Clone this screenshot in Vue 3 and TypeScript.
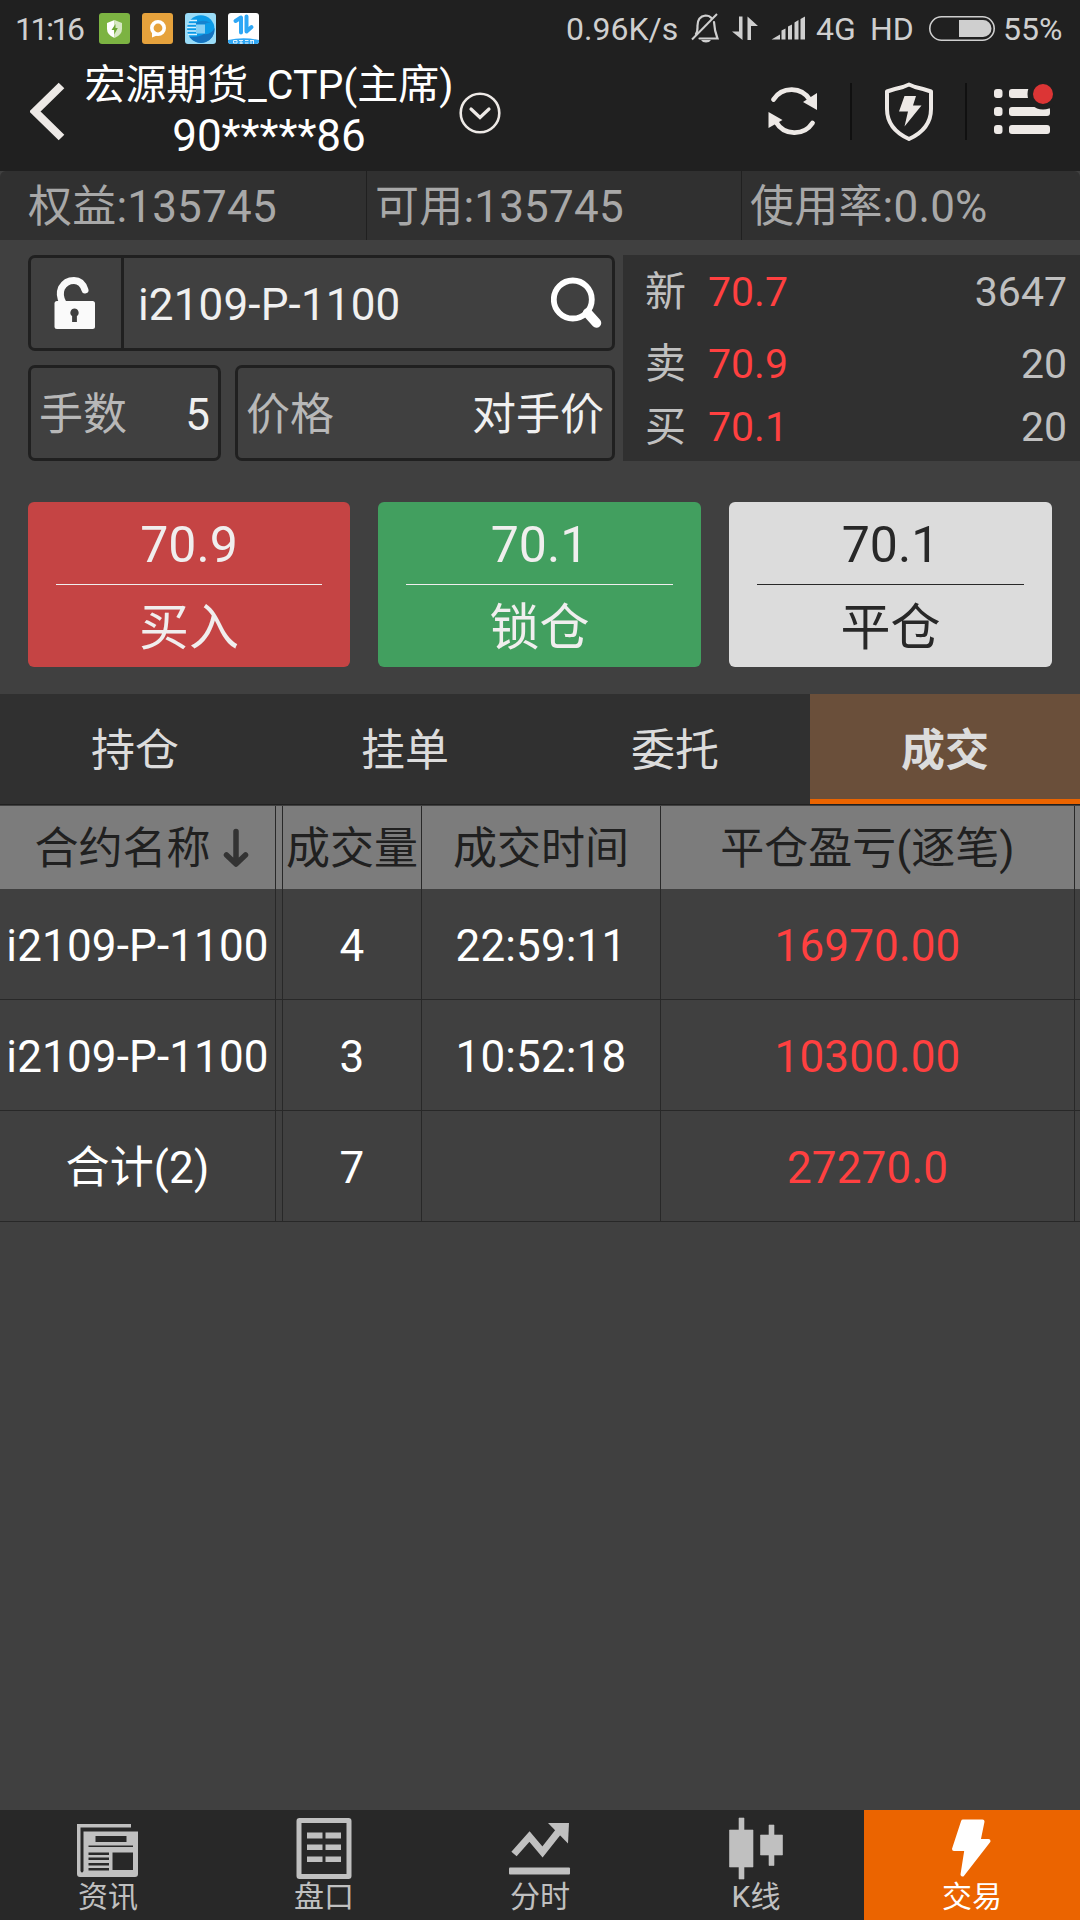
<script setup lang="ts">
interface Quote { label: string; price: string; volume: string }
interface Action { price: string; name: string; kind: string }
interface Deal { name: string; qty: string; time: string; profit: string }

const funds: string[] = ['权益:135745', '可用:135745', '使用率:0.0%']
const quotes: Quote[] = [
  { label: '新', price: '70.7', volume: '3647' },
  { label: '卖', price: '70.9', volume: '20' },
  { label: '买', price: '70.1', volume: '20' },
]
const actions: Action[] = [
  { price: '70.9', name: '买入', kind: 'buy' },
  { price: '70.1', name: '锁仓', kind: 'hedge' },
  { price: '70.1', name: '平仓', kind: 'close' },
]
const tabs: string[] = ['持仓', '挂单', '委托', '成交']
const activeTab = '成交'
const deals: Deal[] = [
  { name: 'i2109-P-1100', qty: '4', time: '22:59:11', profit: '16970.00' },
  { name: 'i2109-P-1100', qty: '3', time: '10:52:18', profit: '10300.00' },
  { name: '合计(2)', qty: '7', time: '', profit: '27270.0' },
]
</script>

<template>
  <div class="screen">
    <header class="top">
      <div class="status">
        <span class="clock">11:16</span>
        <div class="apps">
          <svg width="31" height="31" viewBox="0 0 31 31">
            <rect width="31" height="31" rx="3" fill="#7cb342" />
            <path d="M15.5 7 L8 10 V16 Q8 22 15.5 25 Z" fill="#fff" />
            <path d="M15.5 7 L23 10 V16 Q23 22 15.5 25 Z" fill="#d7e8c4" />
            <path d="M16.5 11 L12.5 17 H15.2 V21.5 L18.8 15 H16.5 Z" fill="#6aa532" />
          </svg>
          <svg width="31" height="31" viewBox="0 0 31 31">
            <rect width="31" height="31" rx="3" fill="#e6a23c" />
            <circle cx="16" cy="15" r="6.2" fill="none" stroke="#fff" stroke-width="3.6" />
            <path d="M10 18 V24.5 L16 22 Z" fill="#fff" />
          </svg>
          <svg width="31" height="31" viewBox="0 0 31 31">
            <rect width="31" height="31" rx="3" fill="#9adcf8" />
            <circle cx="15.800" cy="16" r="13.700" fill="#0b9be8" />
            <path d="M29.500 15 A13.700 13.700 0 0 1 4.500 24 Q14 24.500 19 21 Q26 22 29.500 15Z" fill="#1673c0" />
            <path d="M9 11 Q17 5 26 10 Q21 9 20 11.500 H9Z" fill="#1583d0" />
            <path d="M4.500 7.500 H12 M2.500 11 H11 M2 14.500 H11 M2 18 H11 M3 21.500 H12" stroke="#d8f2ff" stroke-width="1.400" />
            <rect x="11" y="11.500" width="9" height="9" fill="#86d0f5" />
          </svg>
          <svg width="31" height="31" viewBox="0 0 31 31">
            <rect width="31" height="31" rx="3" fill="#fff" />
            <path d="M7.5 8 L13 4.500 V19.500 M18.500 3.500 V18.500 L23.500 14" fill="none" stroke="#2ea7f5" stroke-width="4" stroke-linecap="round" stroke-linejoin="round" />
            <path d="M0 27 Q15.500 23.500 31 27 V28 Q31 31 28 31 H3 Q0 31 0 28 Z" fill="#2ea7f5" />
            <path d="M5.500 27.500 H9 V30 H5.500 Z M11 27.500 H15 M11.500 30 H15 M13 27 V31 M17 27.500 H20.500 M17 30 H20.500 M22 27.500 H25.500 M23 27 V31 M25.500 27 V31" fill="none" stroke="#dff2ff" stroke-width="1" />
          </svg>
        </div>
        <span class="speed">0.96K/s</span>
        <svg class="bell" width="28" height="30" viewBox="0 0 28 30">
          <path d="M5 21 Q6.500 19 6.500 14 Q6 3.500 14.500 2.500 Q18.500 2.500 20.500 5 M23 9 Q23.500 18 26.500 25.500 H8.500" fill="none" stroke="#cfcfcf" stroke-width="2.200" stroke-linecap="round" />
          <path d="M1 26.500 L26 1" stroke="#cfcfcf" stroke-width="2" />
          <path d="M10 27 H20 Q18.500 29.500 15 29.500 Q11.500 29.500 10 27Z" fill="#cfcfcf" />
        </svg>
        <svg class="updown" width="26" height="25" viewBox="0 0 26 25">
          <path d="M7 0.500 H10.500 V24 L0 15.500 H7 Z M15.500 24 H19 V10 H26 L15.500 0.500 Z" fill="#cfcfcf" />
        </svg>
        <svg class="signal" width="35" height="24" viewBox="0 0 35 24">
          <path d="M0.500 23.500 L9 18.500 V23.500 Z M10.500 23.500 V14.500 L14.500 12.500 V23.500 Z M17 23.500 V10.500 L21 8.500 V23.500 Z M23.500 23.500 V6.500 L27.500 4 V23.500 Z M29.500 23.500 V3 L34 0.500 V23.500 Z" fill="#cfcfcf" />
        </svg>
        <span class="net">4G</span>
        <span class="hd">HD</span>
        <svg class="battery" width="66" height="25" viewBox="0 0 66 25">
          <rect x="0.800" y="0.800" width="64.400" height="23.400" rx="11.700" fill="none" stroke="#cfcfcf" stroke-width="1.600" />
          <path d="M30 4 H54 A8.500 8.500 0 0 1 54 21 H30 Z" fill="#cfcfcf" />
        </svg>
        <span class="percent">55%</span>
      </div>
      <div class="bar">
        <svg class="back" width="36" height="60" viewBox="0 0 36 60">
          <path d="M31.500 3.500 L5 29.500 L31.500 55.500" fill="none" stroke="#ede9e6" stroke-width="8" />
        </svg>
        <div class="title">
          <div class="broker">宏源期货_CTP(主席)</div>
          <div class="account">90*****86</div>
        </div>
        <svg class="expand" width="42" height="42" viewBox="0 0 42 42">
          <circle cx="21" cy="21" r="19.300" fill="none" stroke="#ede9e6" stroke-width="2.600" />
          <path d="M12 17 L21 25.500 L30 17" fill="none" stroke="#ede9e6" stroke-width="3.200" stroke-linecap="round" />
        </svg>
        <svg class="refresh" width="50" height="50" viewBox="0 0 50 50">
          <path d="M5.500 13.500 A21.500 21.500 0 0 1 42 14 M44.500 37 A21.500 21.500 0 0 1 8 36" fill="none" stroke="#ede9e6" stroke-width="4.800" stroke-linecap="round" />
          <path d="M49 7 V24 L35 16 Z M0.500 26 V42 L14.500 34 Z" fill="#ede9e6" />
        </svg>
        <i class="sep" />
        <svg class="shield" width="50" height="60" viewBox="0 0 50 60">
          <path d="M25 2.500 L31 5 Q40 7 47 9.500 V27 Q47 47 25 57 Q3 47 3 27 V9.500 Q10 7 19 5 Z" fill="none" stroke="#ede9e6" stroke-width="4" stroke-linejoin="round" />
          <path d="M20.500 14 H32 L29 23.500 H37.500 L20.500 44.500 L24 29.500 H15 Z" fill="#ede9e6" />
        </svg>
        <i class="sep" />
        <svg class="menu" width="60" height="54" viewBox="0 0 60 54">
          <g fill="#ede9e6">
            <rect x="0" y="6" width="8.500" height="9" rx="3" /><rect x="0" y="24" width="8.500" height="9" rx="3" /><rect x="0" y="42" width="8.500" height="9" rx="3" />
            <rect x="15" y="6" width="41" height="9" rx="3" /><rect x="15" y="24" width="41" height="9" rx="3" /><rect x="15" y="42" width="41" height="9" rx="3" />
          </g>
          <circle cx="49" cy="11" r="15.500" fill="#202020" />
          <circle cx="49" cy="11" r="10" fill="#dc3535" />
        </svg>
      </div>
    </header>

    <section class="funds">
      <span v-for="f in funds" :key="f">{{ f }}</span>
    </section>

    <section class="order">
      <div class="form">
        <div class="field symbol">
          <div class="lock">
            <svg width="42" height="54" viewBox="0 0 42 54">
              <path d="M9 27 Q4.500 19 7.500 12 Q11.500 4.500 20 4.500 Q28 4.500 31 14" fill="none" stroke="#fafafa" stroke-width="7" stroke-linecap="round" />
              <rect x="0.500" y="25" width="40.500" height="28" rx="2.500" fill="#fafafa" />
              <path d="M20.500 32.500 a4.200 4.200 0 0 1 2.400 7.600 V46 h-4.800 V40.100 A4.200 4.200 0 0 1 20.500 32.500Z" fill="#404040" />
            </svg>
          </div>
          <span class="value">i2109-P-1100</span>
          <svg class="search" width="51" height="52" viewBox="0 0 51 52">
            <circle cx="21.800" cy="22.500" r="19" fill="none" stroke="#fff" stroke-width="5.800" />
            <path d="M36.500 36 L45.500 46" stroke="#fff" stroke-width="9.500" stroke-linecap="round" />
          </svg>
        </div>
        <div class="pair">
          <div class="field lots"><span class="label">手数</span><span class="value">5</span></div>
          <div class="field price"><span class="label">价格</span><span class="value">对手价</span></div>
        </div>
      </div>
      <div class="quotes">
        <div v-for="q in quotes" :key="q.label" class="quote">
          <span class="side">{{ q.label }}</span>
          <span class="last">{{ q.price }}</span>
          <span class="volume">{{ q.volume }}</span>
        </div>
      </div>
    </section>

    <section class="actions">
      <div v-for="a in actions" :key="a.name" class="action" :class="a.kind">
        <div class="aprice">{{ a.price }}</div>
        <div class="rule" />
        <div class="aname">{{ a.name }}</div>
      </div>
    </section>

    <nav class="tabs">
      <div v-for="t in tabs" :key="t" class="tab" :class="{ on: t === activeTab }">{{ t }}</div>
    </nav>

    <section class="table">
      <div class="row head">
        <div class="cell first">
          <span>合约名称</span>
          <svg width="26" height="40" viewBox="0 0 26 40">
            <path d="M13 3.500 V35 M3.500 27 L13 36 L22.500 27" fill="none" stroke="#333" stroke-width="5.500" stroke-linecap="round" stroke-linejoin="round" />
          </svg>
        </div>
        <div class="cell" />
        <div class="cell">成交量</div>
        <div class="cell">成交时间</div>
        <div class="cell">平仓盈亏(逐笔)</div>
      </div>
      <div v-for="(d, i) in deals" :key="i" class="row deal">
        <div class="cell">{{ d.name }}</div>
        <div class="cell" />
        <div class="cell">{{ d.qty }}</div>
        <div class="cell">{{ d.time }}</div>
        <div class="cell profit">{{ d.profit }}</div>
      </div>
    </section>

    <footer class="nav">
      <div class="item">
        <svg width="62" height="66" viewBox="1 0 62 66">
          <path d="M1 7 H55 V10.500 H4.500 V54 Q6 57 7.500 54 V14.500 H62 V57 Q62 60 59 60 H4 Q1 60 1 57 Z" fill="#c0c0c0" />
          <path d="M19.500 19 H50.500 V25 H19.500 Z M12.500 28.500 H57 V30 H12.500 Z M12.500 35.500 H33 V38 H12.500 Z M12.500 40.500 H33 V43 H12.500 Z M12.500 46 H33 V48.500 H12.500 Z M12.500 51 H33 V53.500 H12.500 Z M36.500 35.500 H57 V53 H36.500 Z" fill="#282828" />
        </svg>
        <span>资讯</span>
      </div>
      <div class="item">
        <svg width="56" height="66" viewBox="0 0 56 66">
          <rect x="3" y="3.500" width="50" height="56" rx="0.500" fill="none" stroke="#c0c0c0" stroke-width="5" />
          <path d="M11 15.500 h15.500 v6 h-15.500z M29.500 15.500 h15.500 v6 h-15.500z M11 27.500 h15.500 v5.500 h-15.500z M29.500 27.500 h15.500 v5.500 h-15.500z M11 39.500 h15.500 v5.500 h-15.500z M29.500 39.500 h15.500 v5.500 h-15.500z" fill="#c0c0c0" />
        </svg>
        <span>盘口</span>
      </div>
      <div class="item">
        <svg width="62" height="66" viewBox="1 0 62 66">
          <path d="M6 37 L21.500 19.500 L34.500 35 L51 14" fill="none" stroke="#c0c0c0" stroke-width="7" />
          <path d="M40 6 H61 L60 26.500 Z" fill="#c0c0c0" />
          <rect x="1" y="50.500" width="61" height="7" rx="1" fill="#c0c0c0" />
        </svg>
        <span>分时</span>
      </div>
      <div class="item">
        <svg width="54" height="66" viewBox="0 0 54 66">
          <path d="M10 1 H15 V13 H24 V50 H15 V62 H10 V50 H0.500 V13 H10 Z M40 8 H45 V18 H53.500 V38 H45 V48.500 H40 V38 H31.500 V18 H40 Z" fill="#c0c0c0" stroke="#c0c0c0" stroke-width="0.600" stroke-linejoin="round" />
        </svg>
        <span>K线</span>
      </div>
      <div class="item on">
        <svg width="40" height="66" viewBox="1 0 40 66">
          <path d="M12 4.500 H31.500 L27.500 24 H37.500 L11.500 57.500 L15.500 32 H3 Z" fill="#fff" stroke="#fff" stroke-width="4" stroke-linejoin="round" />
        </svg>
        <span>交易</span>
      </div>
    </footer>
  </div>
</template>

<style>
body {
  background: #404040;
}
</style>

<style scoped>
.screen {
  width: 1080px;
  height: 1920px;
  display: flex;
  flex-direction: column;
  overflow: hidden;
  background: #404040;
  color: #f0f0f0;
  font-family: Roboto, "Noto Sans CJK SC", sans-serif;
  font-size: 44px;
  line-height: 52px;
  white-space: nowrap;
}
.screen *, .screen {
  box-sizing: border-box;
}
svg {
  display: block;
  flex: none;
}
.top {
  height: 171px;
  background: #202020;
}
.status {
  height: 56px;
  display: flex;
  align-items: center;
  padding-left: 15px;
  font-size: 32px;
  line-height: 58px;
  color: #cfcfcf;
}
.status > span {
  flex: none;
  padding-top: 2px;
}
.clock {
  width: 84px;
  letter-spacing: -2.400px;
}
.apps {
  display: flex;
  flex: none;
  gap: 12px;
  width: 467px;
}
.speed {
  width: 125px;
}
.bell {
  margin-right: 13px;
}
.updown {
  margin-right: 13px;
}
.signal {
  margin-right: 10px;
}
.net {
  width: 54px;
}
.hd {
  width: 59px;
}
.percent {
  margin-left: 8px;
}
.bar {
  height: 115px;
  display: flex;
  align-items: flex-start;
  padding-left: 30px;
}
.back {
  margin-top: 26px;
}
.title {
  width: 388px;
  margin-left: 9px;
  padding-top: 4px;
  text-align: center;
  line-height: 50px;
  color: #fff;
}
.broker {
  font-size: 41px;
}
.account {
  padding-top: 1px;
}
.expand {
  margin: 36px 0 0 -4px;
}
.refresh {
  margin: 30px 0 0 267px;
}
.sep {
  width: 2px;
  height: 57px;
  margin-top: 27px;
  background: #101010;
}
.refresh + .sep {
  margin-left: 32px;
}
.shield {
  margin: 26px 0 0 32px;
}
.shield + .sep {
  margin-left: 31px;
}
.menu {
  margin: 27px 0 0 27px;
}
.funds {
  height: 69px;
  display: grid;
  grid-template-columns: 367px 375px 338px;
  grid-template-rows: 69px;
  border-radius: 6px 6px 0 0;
  background: #303030;
  color: #a8a8a8;
  line-height: 65px;
  letter-spacing: 0.200px;
}
.funds span {
  padding: 4px 0 0 8px;
  border-right: 1px solid #202020;
}
.funds span:first-child {
  padding-left: 28px;
}
.funds span:last-child {
  border: 0;
}
.order {
  height: 262px;
  padding: 15px 0 0 28px;
  display: flex;
  gap: 8px;
}
.form {
  width: 587px;
  display: flex;
  flex-direction: column;
  gap: 14px;
}
.field {
  height: 96px;
  display: flex;
  align-items: center;
  border: 3px solid #202020;
  border-radius: 7px;
}
.field .label {
  color: #b8b8b8;
}
.field .label, .field .value {
  padding-top: 3px;
}
.lock {
  width: 93px;
  height: 90px;
  padding-left: 23px;
  display: flex;
  align-items: center;
  border-right: 3px solid #202020;
}
.symbol .value {
  margin-left: 14px;
  letter-spacing: 0.150px;
}
.search {
  margin-left: auto;
  margin-right: 10px;
}
.pair {
  display: flex;
  gap: 14px;
}
.lots, .price {
  justify-content: space-between;
  padding: 0 8px;
}
.lots {
  width: 193px;
}
.price {
  width: 380px;
}
.quotes {
  width: 457px;
  height: 206px;
  background: #303030;
  padding: 5px 13px 0 22px;
  font-size: 41px;
  color: #c0c0c0;
}
.quote {
  height: 63px;
  line-height: 63px;
  display: flex;
}
.quote:first-child {
  height: 73px;
  line-height: 64px;
}
.side {
  width: 63px;
}
.last {
  color: #ff4040;
}
.volume {
  margin-left: auto;
}
.actions {
  height: 192px;
  padding: 0 28px;
  display: grid;
  grid-template-columns: 322px 323px 323px;
  column-gap: 28px;
}
.action {
  height: 165px;
  border-radius: 6px;
  padding: 0 28px;
  text-align: center;
  font-size: 50px;
  color: #f0eeee;
}
.aprice {
  height: 82px;
  line-height: 87px;
}
.rule {
  height: 1px;
  background: currentColor;
}
.aname {
  height: 82px;
  line-height: 87px;
}
.buy {
  background: #c54444;
}
.hedge {
  background: #429f5f;
}
.close {
  background: #dcdcdc;
  color: #282828;
}
.tabs {
  height: 112px;
  display: flex;
  border-bottom: 1px solid #404040;
  background: linear-gradient(#303030 110px, #202020 110px);
}
.tab {
  width: 270px;
  height: 110px;
  line-height: 115px;
  text-align: center;
  color: #dcdcdc;
}
.tab.on {
  background: #6a4f3a;
  border-bottom: 5px solid #eb6400;
  font-weight: 700;
}
.row {
  height: 111px;
  display: grid;
  grid-template-columns: 276px 7px 139px 239px 414px;
  border-bottom: 1px solid #282828;
  color: #fff;
}
.row.head {
  height: 83px;
  border: 0;
  background: #7c7c7c;
  color: #202020;
}
.deal {
  letter-spacing: 0.150px;
}
.cell {
  display: flex;
  align-items: center;
  justify-content: center;
  border-right: 1px solid #282828;
  padding-top: 3px;
}
.first {
  gap: 12px;
  padding-left: 8px;
}
.first svg {
  margin-top: -3px;
}
.cell.profit {
  color: #ff4040;
}
.nav {
  margin-top: auto;
  height: 110px;
  display: flex;
  background: #282828;
}
.item {
  width: 216px;
  padding-top: 7px;
  display: flex;
  flex-direction: column;
  align-items: center;
  font-size: 30px;
  line-height: 28px;
  color: #c0c0c0;
}
.item.on {
  background: #eb6400;
  color: #fff;
}
</style>
